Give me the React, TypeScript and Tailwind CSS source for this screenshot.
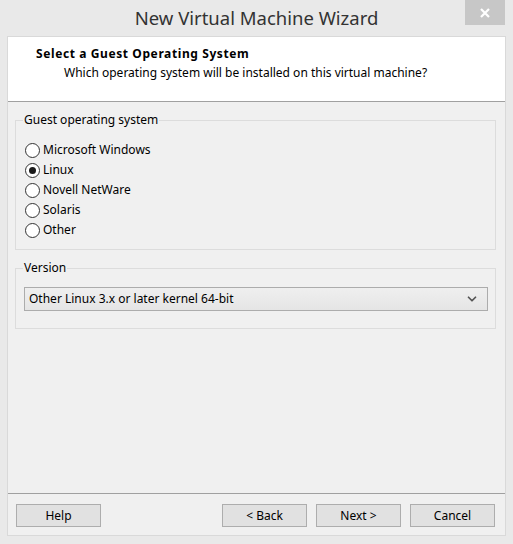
import type { ReactNode } from 'react';
import { ChevronDown } from 'lucide-react';

const systems = [
  { label: 'Microsoft Windows', checked: false },
  { label: 'Linux', checked: true },
  { label: 'Novell NetWare', checked: false },
  { label: 'Solaris', checked: false },
  { label: 'Other', checked: false },
];

function GroupBox({ title, className, children }: { title: string; className?: string; children: ReactNode }) {
  return (
    <div className={`flex flex-col ${className ?? ''}`}>
      <div className="flex h-[16px]">
        <div className="w-[8px] h-[8px] self-end border-t border-l border-[#dcdcdc]" />
        <span className="px-[1px]">{title}</span>
        <div className="flex-1 h-[8px] self-end border-t border-r border-[#dcdcdc]" />
      </div>
      <div className="border-x border-b border-[#dcdcdc]">{children}</div>
    </div>
  );
}

function Radio({ label, checked }: { label: string; checked: boolean }) {
  return (
    <div className="flex items-center h-[20px] gap-[3px]">
      <span className="flex items-center justify-center w-[15px] h-[15px] rounded-full border border-[#333] bg-white">
        {checked && <span className="w-[7px] h-[7px] rounded-full bg-[#1a1a1a]" />}
      </span>
      <span>{label}</span>
    </div>
  );
}

function WizardButton({ label }: { label: string }) {
  return (
    <button className="w-[85px] h-[23px] border border-[#adadad] bg-[#e1e1e1] text-[12px] text-black">
      {label}
    </button>
  );
}

export default function App() {
  return (
    <main
      className="flex flex-col w-[513px] h-[544px] bg-[#e9e9e9] text-[12px] text-black"
      style={{ fontFamily: '"Noto Sans", "Open Sans", sans-serif' }}
    >
      <div className="flex h-[36px]">
        <div className="flex-1 pl-[48px] pt-[5px] text-center text-[18.5px] leading-[26px] text-[#333]">
          New Virtual Machine Wizard
        </div>
        <div className="flex items-center justify-center w-[40px] h-[25px] mr-[8px] bg-[#c7c7c7]">
          <svg width="10" height="10" viewBox="0 0 10 10">
            <path d="M1 1L9 9M9 1L1 9" stroke="white" strokeWidth="2.2" />
          </svg>
        </div>
      </div>

      <div className="flex flex-col h-[500px] mx-[7px] border border-[#d9d9d9] bg-[#f0f0f0]">
        <div className="flex flex-col h-[65px] pt-[9px] bg-white border-b border-[#a0a0a0] leading-[16px]">
          <div className="pl-[28px] font-bold tracking-[0.6px]">Select a Guest Operating System</div>
          <div className="pl-[56px] pt-[3px]">Which operating system will be installed on this virtual machine?</div>
        </div>

        <div className="flex flex-col pl-[7px] pr-[9px] pt-[10px] leading-[16px]">
          <GroupBox title="Guest operating system">
            <div className="pl-[9px] pt-[12px] pb-[9px]">
              {systems.map((s) => (
                <Radio key={s.label} label={s.label} checked={s.checked} />
              ))}
            </div>
          </GroupBox>

          <GroupBox title="Version" className="mt-[10px]">
            <div className="pl-[8px] pr-[7px] pt-[11px] pb-[17px]">
              <div className="flex items-center justify-between h-[24px] pl-[4px] pr-[8px] border border-[#acacac] bg-gradient-to-b from-[#efefef] to-[#e5e5e5]">
                <span>Other Linux 3.x or later kernel 64-bit</span>
                <ChevronDown size={14} strokeWidth={3} className="text-[#555]" />
              </div>
            </div>
          </GroupBox>
        </div>

        <div className="flex-1" />

        <div className="flex h-[42px] pt-[10px] pl-[8px] pr-[10px] border-t border-[#a0a0a0]">
          <WizardButton label="Help" />
          <div className="flex gap-[9px] ml-auto">
            <WizardButton label="< Back" />
            <WizardButton label="Next >" />
            <WizardButton label="Cancel" />
          </div>
        </div>
      </div>
    </main>
  );
}
